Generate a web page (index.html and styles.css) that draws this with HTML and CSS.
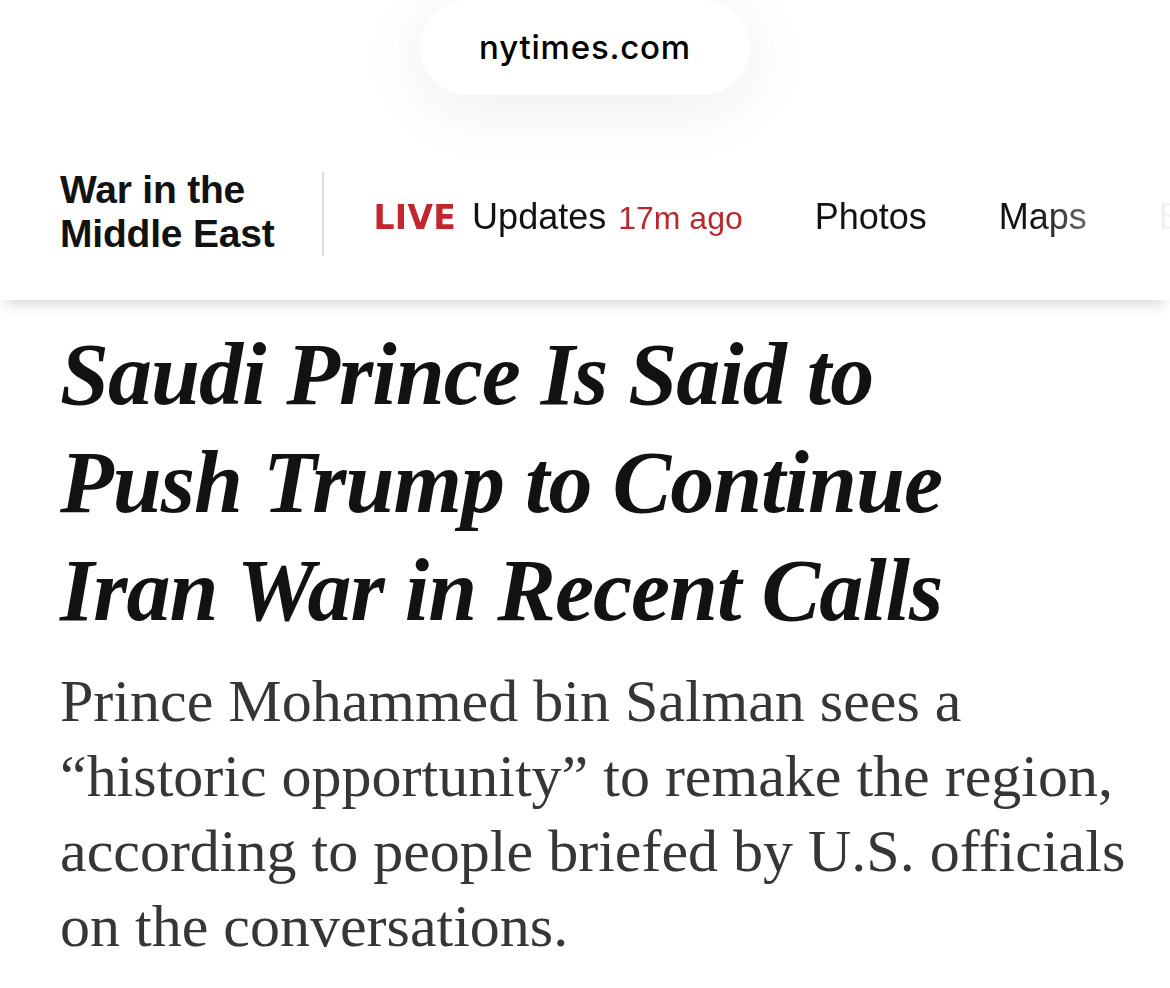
FILE: index.html
```html
<!DOCTYPE html>
<html lang="en">
<head>
<meta charset="utf-8">
<title>NYT</title>
<link rel="stylesheet" href="styles.css">
</head>
<body>
<div class="urlbar">
  <div class="pill">nytimes.com</div>
</div>
<nav class="nav">
  <div class="section-title">War in the<br>Middle East</div>
  <div class="divider"></div>
  <div class="links">
    <a class="link live-link"><span class="live">LIVE</span> Updates <span class="ago">17m ago</span></a>
    <a class="link">Photos</a>
    <a class="link">Maps</a>
    <a class="link">Explainer</a>
  </div>
</nav>
<main class="article">
  <h1 class="headline">Saudi Prince Is Said to Push Trump to Continue Iran War in Recent Calls</h1>
  <p class="summary">Prince Mohammed bin Salman sees a “historic opportunity” to remake the region, according to people briefed by U.S. officials on the conversations.</p>
</main>
</body>
</html>
```

FILE: styles.css
```css
html, body {
  margin: 0;
  padding: 0;
  background: #fff;
}

body {
  width: 1170px;
  overflow-x: hidden;
}

.urlbar {
  height: 120px;
  display: flex;
  justify-content: center;
  position: relative;
  z-index: 3;
}

.pill {
  width: 330px;
  height: 95px;
  border-radius: 48px;
  background: #fff;
  box-shadow: 0 10px 70px rgba(0, 0, 0, 0.075);
  display: flex;
  align-items: center;
  justify-content: center;
  font-family: Inter, "Noto Sans", sans-serif;
  font-weight: 500;
  font-size: 33px;
  color: #000;
  letter-spacing: 0.8px;
  padding-bottom: 2px;
  box-sizing: border-box;
}

.nav {
  height: 180px;
  background: #fff;
  display: flex;
  align-items: center;
  padding-left: 60px;
  position: relative;
  z-index: 2;
  box-shadow: 0 10px 14px -6px rgba(0, 0, 0, 0.16);
}

.section-title {
  font-family: "Liberation Sans", Arial, sans-serif;
  font-weight: 700;
  font-size: 39px;
  line-height: 44px;
  color: #121212;
  letter-spacing: -0.2px;
  margin-top: 4px;
}

.divider {
  width: 2px;
  height: 84px;
  background: #dcdcdc;
  margin-left: 47px;
  margin-right: 50px;
  margin-top: 8px;
}

.links {
  flex: 1;
  display: flex;
  align-items: baseline;
  gap: 72px;
  overflow: hidden;
  white-space: nowrap;
  padding-top: 14px;
  font-family: "Liberation Sans", Arial, sans-serif;
  font-size: 36px;
  color: #121212;
  -webkit-mask-image: linear-gradient(to right, #000 0, #000 calc(100% - 135px), rgba(0,0,0,0.05) calc(100% - 5px));
  mask-image: linear-gradient(to right, #000 0, #000 calc(100% - 135px), rgba(0,0,0,0.05) calc(100% - 5px));
}

.link {
  color: #121212;
  text-decoration: none;
}

.live {
  color: #c1272d;
  font-family: "DejaVu Sans", sans-serif;
  font-weight: 700;
  font-size: 33px;
  letter-spacing: 0.3px;
  margin-right: 6px;
}

.ago {
  color: #b8292f;
  font-size: 32px;
  margin-left: 2px;
}

.article {
  padding: 21px 20px 0 60px;
}

.headline {
  margin: 0;
  max-width: 950px;
  font-family: "Liberation Serif", "Times New Roman", serif;
  font-style: italic;
  font-weight: 700;
  font-size: 88px;
  line-height: 108px;
  letter-spacing: -1px;
  color: #121212;
}

.summary {
  margin: 19px 0 0 0;
  font-family: "Liberation Serif", "Times New Roman", serif;
  font-size: 60px;
  line-height: 75px;
  color: #363636;
}
```
